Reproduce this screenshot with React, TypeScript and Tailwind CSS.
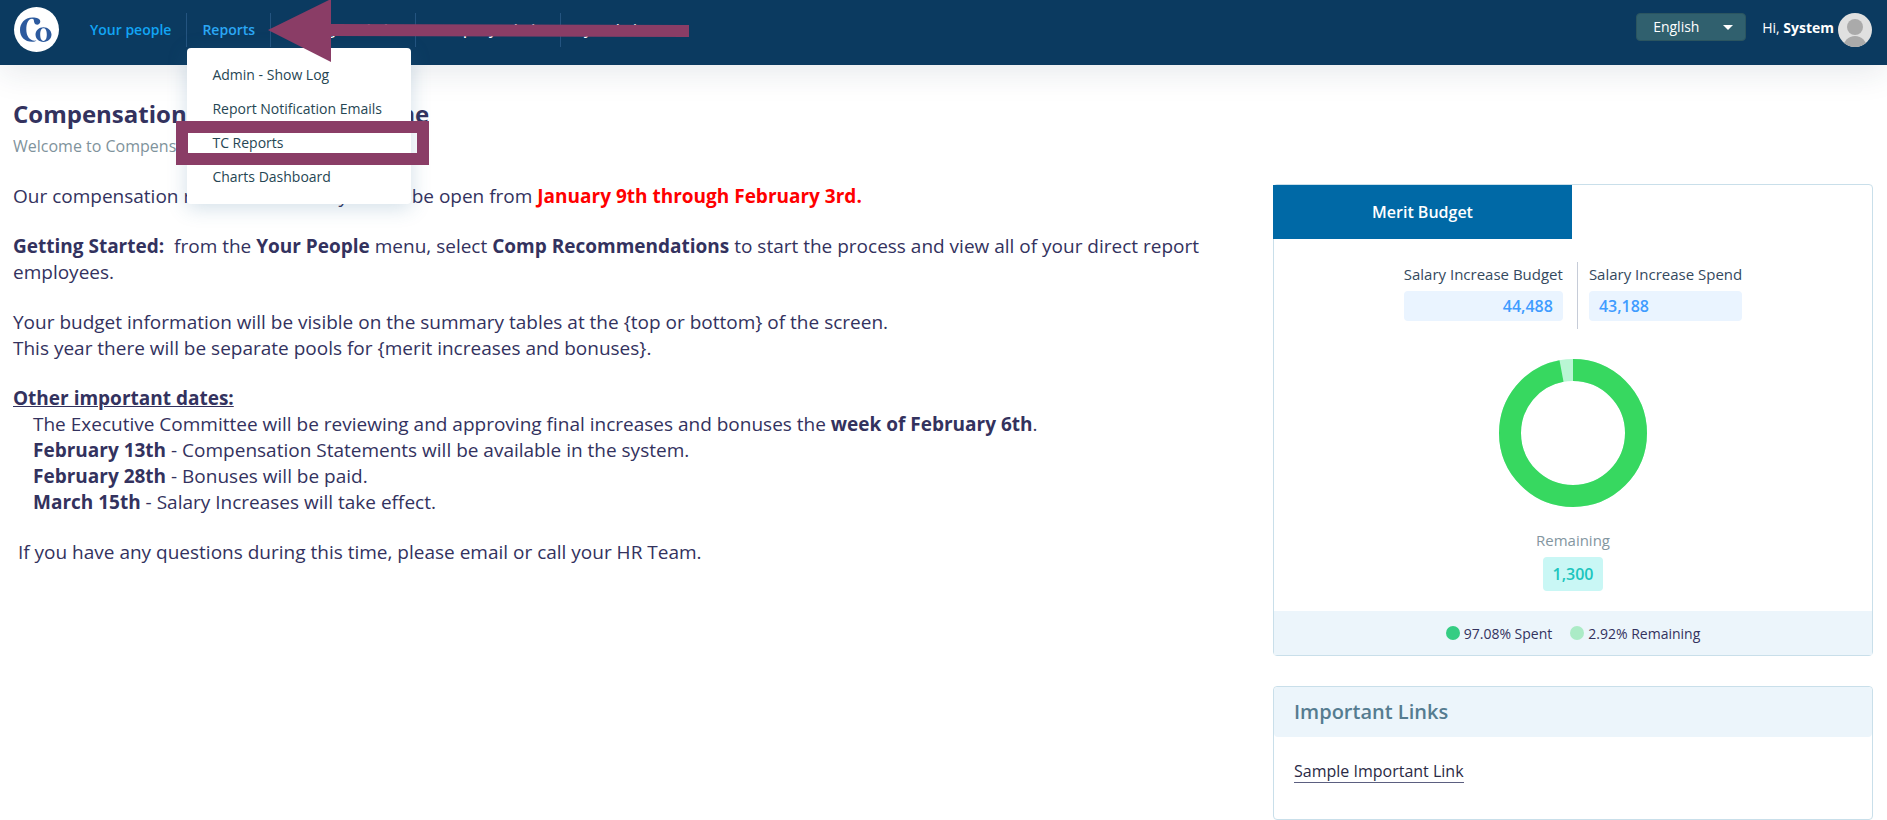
import React from "react";

const navLink = "flex h-[34px] items-center border-r border-[#245480] px-[15px] pb-[2px] text-[14px] font-semibold";

const reportItems = ["Admin - Show Log", "Report Notification Emails", "TC Reports", "Charts Dashboard"];

function Logo() {
  return (
    <a href="#home" aria-label="Home" className="flex h-[45px] w-[45px] items-center justify-center rounded-full bg-white">
      <svg viewBox="0 0 45 45" className="h-[45px] w-[45px]" fill="none">
        <path d="M18.5 10.5C10.500 10.500 6 16.500 6 23C6 29.800 10.700 34.800 18.200 34.800C20 34.800 21.700 34.300 22.500 33.500C16 34.500 12.300 29.500 12.300 22.500C12.300 16 14.500 11.800 18 11.800C21 11.800 19 15.500 21.500 17.200C23.500 18.400 26.300 17 26.300 14.500C26.300 11.800 23 10.500 18.500 10.500Z" fill="#2d5a9e" />
        <path fillRule="evenodd" d="M29.500 20.200C25 20.200 21.500 23.500 21.500 27.600C21.500 31.700 25 35 29.500 35C34 35 37.500 31.700 37.500 27.600C37.500 23.500 34 20.200 29.500 20.200ZM29.500 21.300C31.800 21.300 32.800 23.800 32.800 27.600C32.800 31.400 31.800 33.900 29.500 33.900C27.200 33.900 26.200 31.400 26.200 27.600C26.200 23.800 27.200 21.300 29.500 21.300Z" fill="#2d5a9e" />
      </svg>
    </a>
  );
}

function ReportsMenu() {
  return (
    <div className="absolute left-0 top-[35px] z-10 flex w-[224px] flex-col rounded bg-white py-[10px] shadow-[0_4px_20px_rgba(50,110,150,0.22)]">
      {reportItems.map((item) => (
        <a key={item} href="#reports" className="px-[25px] text-[14px] leading-[34px] text-[#264653]">
          {item}
        </a>
      ))}
      <div className="pointer-events-none absolute left-[-11px] top-[73px] h-[44px] w-[253px] border-[12px] border-[#8a3d66]" />
    </div>
  );
}

function Header() {
  return (
    <header className="relative z-10 flex h-[65px] items-start justify-between bg-[#0b3a60] pl-[14px] pr-[15px] shadow-[0_8px_32px_rgba(30,50,80,0.1)]">
      <div className="flex">
        <div className="pt-[7px]">
          <Logo />
        </div>
        <nav className="relative ml-4 flex pt-[13px]">
          <a href="#people" className={`${navLink} text-[#12a5f4]`}>Your people</a>
          <div className="relative">
            <a href="#reports" className={`${navLink} text-[#2ba8f5]`}>Reports</a>
            <ReportsMenu />
          </div>
          <a href="#manager" className={`${navLink} min-w-[145px] justify-center text-white`}>Manager Admin</a>
          <a href="#company" className={`${navLink} min-w-[145px] justify-center text-white`}>Company Admin</a>
          <a href="#system" className="flex h-[34px] items-center px-[15px] pb-[2px] text-[14px] font-semibold text-white">Sys Admin</a>
          <svg viewBox="0 0 421 64" className="pointer-events-none absolute left-[193px] top-0 z-20 h-[64px] w-[421px]" fill="#8a3d66">
            <path d="M0 30L63 -1V24L421 25V37L63 36V62Z" />
          </svg>
        </nav>
      </div>
      <div className="flex items-start gap-4 pt-[13px] text-white">
        <div className="relative">
          <select aria-label="Language" className="h-[28px] w-[110px] appearance-none rounded border border-[#2b5560] bg-[#30606e] pb-px pl-4 text-[14px] leading-[20px] text-white">
            <option>English</option>
          </select>
          <svg viewBox="0 0 10 5" className="pointer-events-none absolute right-[13px] top-[12px] h-[5px] w-[10px]" fill="white">
            <path d="M0 0H10L5 5Z" />
          </svg>
        </div>
        <div className="flex gap-1">
          <p className="pt-[5px] text-[14px] leading-[20px]">
            Hi, <b className="font-bold">System</b>
          </p>
          <svg viewBox="0 0 34 34" className="h-[34px] w-[34px] rounded-full" fill="#aaa">
            <rect width="34" height="34" fill="#e0e0e0" />
            <circle cx="17" cy="14" r="8" />
            <circle cx="17" cy="35" r="12" />
          </svg>
        </div>
      </div>
    </header>
  );
}

function Donut() {
  return (
    <svg viewBox="0 0 148 148" className="h-[148px] w-[148px] -rotate-90" fill="none" strokeWidth="22">
      <circle cx="74" cy="74" r="63" stroke="#b9f6d4" />
      <circle cx="74" cy="74" r="63" stroke="#37d860" pathLength="100" strokeDasharray="97.08 2.92" />
    </svg>
  );
}

function MeritBudget() {
  return (
    <section className="rounded border border-[#c9dfea]">
      <button className="-ml-px block h-[54px] w-1/2 bg-[#0069a6] text-[16px] font-semibold text-white">Merit Budget</button>
      <div className="flex flex-col items-center pt-[23px]">
        <div className="flex text-[15px] leading-[20px] text-[#34495e]">
          <div className="h-[67px] border-r border-[#c6ccd8] pr-[14px] pt-[2px]">
            <p>Salary Increase Budget</p>
            <p className="mt-[7px] rounded bg-[#eaf4ff] px-[10px] text-right text-[16px] font-semibold leading-[30px] text-[#3f9cff]">44,488</p>
          </div>
          <div className="pl-[11px] pt-[2px]">
            <p>Salary Increase Spend</p>
            <p className="mt-[7px] rounded bg-[#eaf4ff] px-[10px] text-[16px] font-semibold leading-[30px] text-[#3f9cff]">43,188</p>
          </div>
        </div>
        <div className="mt-[30px]">
          <Donut />
        </div>
        <p className="mt-[23px] text-[15px] leading-[20px] text-[#84969f]">Remaining</p>
        <p className="mt-[7px] rounded bg-[#c9f7f5] px-[10px] text-[16px] font-semibold leading-[34px] text-[#1bc5bd]">1,300</p>
      </div>
      <div className="mt-5 flex h-[44px] items-center justify-center gap-[18px] bg-[#ecf5fb] text-[14px] text-[#33325e]">
        <p className="flex items-center gap-1">
          <span className="h-[14px] w-[14px] rounded-full bg-[#35cd83]" />
          97.08% Spent
        </p>
        <p className="flex items-center gap-1">
          <span className="h-[14px] w-[14px] rounded-full bg-[#abebc6]" />
          2.92% Remaining
        </p>
      </div>
    </section>
  );
}

export default function App() {
  return (
    <div className="bg-white font-['Open_Sans',sans-serif] text-[#33325e]">
      <Header />
      <main className="pl-[13px] pr-[14px] pt-[33px]">
        <h1 className="text-[24px] font-bold leading-[32px]">Compensation Management Home</h1>
        <p className="mt-[5px] text-[16px] leading-[22px] text-[#7f939c]">Welcome to Compensation</p>
        <div className="mt-[26px] flex gap-[60px]">
          <div className="min-w-0 flex-1 text-[19px] leading-[26px]">
            <p>
              Our compensation review for merit cycle will be open from <b className="text-[#ff0000]">January 9th through February 3rd.</b>
            </p>
            <p className="mt-6">
              <b>Getting Started:</b>&nbsp; from the <b>Your People</b> menu, select <b>Comp Recommendations</b> to start the process and view all of your direct report employees.
            </p>
            <p className="mt-6">
              Your budget information will be visible on the summary tables at the {"{top or bottom}"} of the screen.
              <br />
              This year there will be separate pools for {"{merit increases and bonuses}"}.
            </p>
            <h2 className="mt-6 font-bold underline">Other important dates:</h2>
            <ul className="pl-5">
              <li>The Executive Committee will be reviewing and approving final increases and bonuses the <b>week of February 6th</b>.</li>
              <li><b>February 13th</b> - Compensation Statements will be available in the system.</li>
              <li><b>February 28th</b> - Bonuses will be paid.</li>
              <li><b>March 15th</b> - Salary Increases will take effect.</li>
            </ul>
            <p className="mt-6">&nbsp;If you have any questions during this time, please email or call your HR Team.</p>
          </div>
          <aside className="flex w-[600px] shrink-0 flex-col gap-[30px] pt-px">
            <MeritBudget />
            <section className="rounded border border-[#c9dfea]">
              <h2 className="rounded bg-[#ecf5fb] px-5 text-[20px] font-semibold leading-[50px] text-[#557c90]">Important Links</h2>
              <div className="px-5 pb-9 pt-6 text-[16px] leading-[21px]">
                <a href="#sample" className="inline-block border-b border-[#5b5f80] text-[#2a2a45]">Sample Important Link</a>
              </div>
            </section>
          </aside>
        </div>
      </main>
    </div>
  );
}
